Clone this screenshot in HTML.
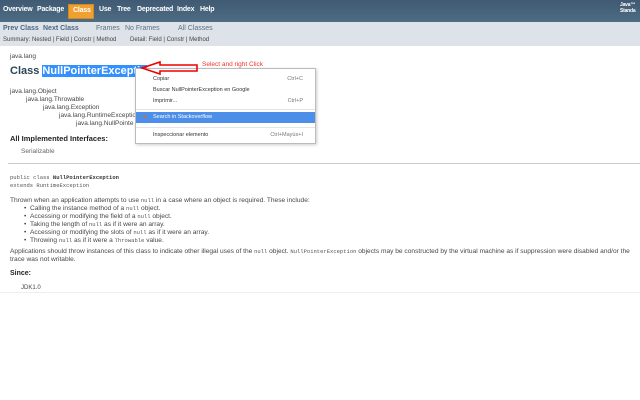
<!DOCTYPE html>
<html><head><meta charset="utf-8"><style>
*{margin:0;padding:0;box-sizing:border-box}
body{width:640px;height:400px;background:#fff;font-family:"Liberation Sans",sans-serif;position:relative;overflow:hidden;color:#353833}
.a{position:absolute;white-space:nowrap}
.top{left:0;top:0;width:640px;height:22px;background:linear-gradient(#3f5a72,#4f6c85)}
.top span{position:absolute;top:6px;color:#fff;font-size:7px;font-weight:bold;letter-spacing:-0.2px}
.sub{left:0;top:22px;width:640px;height:24px;background:#dee3e9}
.s{font-size:7px;color:#4a6782}
.g{font-size:7px;color:#5f6f80}
.t{font-size:6.5px;color:#474747}
.p{font-size:6.6px}
.m{font-family:"Liberation Mono",monospace;font-size:5.5px;color:#555}
.menu{left:135px;top:68px;width:181px;height:76px;background:#fff;border:1px solid #bbb;box-shadow:1px 1px 3px rgba(0,0,0,.2)}
.mi{position:absolute;left:17px;font-size:5.5px;color:#333}
.k{position:absolute;right:12px;font-size:5.5px;color:#777}
</style></head><body>
<div class="a top">
<span style="left:3px">Overview</span><span style="left:37px">Package</span>
<span style="left:68px;top:4px;width:26px;height:15px;background:#f0a030;border:1px solid #d08a20;padding:2px 0 0 4px">Class</span>
<span style="left:99px">Use</span><span style="left:117px">Tree</span><span style="left:137px">Deprecated</span><span style="left:177px">Index</span><span style="left:200px">Help</span>
<span style="left:620px;top:2px;font-size:5px">Java™<br>Standa</span>
</div>
<div class="a sub"></div>
<div class="a s" style="left:3px;top:25px;font-weight:bold;color:#4a6782">Prev Class</div>
<div class="a s" style="left:43px;top:25px;font-weight:bold;color:#4a6782">Next Class</div>
<div class="a g" style="left:96px;top:25px">Frames</div>
<div class="a g" style="left:125px;top:25px">No Frames</div>
<div class="a g" style="left:178px;top:25px">All Classes</div>
<div class="a g" style="left:3px;top:37px;font-size:6px;color:#444">Summary: Nested | Field | Constr | Method</div>
<div class="a g" style="left:130px;top:37px;font-size:6px;color:#444">Detail: Field | Constr | Method</div>

<div class="a t" style="left:10px;top:53px">java.lang</div>
<div class="a" style="left:10px;top:65px;font-size:11px;font-weight:bold;color:#2c4557">Class <span style="background:#3390ff;color:#fff">NullPointerExceptio</span></div>

<div class="a t" style="left:10px;top:88px">java.lang.Object</div>
<div class="a t" style="left:26px;top:96px">java.lang.Throwable</div>
<div class="a t" style="left:43px;top:104px">java.lang.Exception</div>
<div class="a t" style="left:59px;top:112px">java.lang.RuntimeExceptio</div>
<div class="a t" style="left:76px;top:120px">java.lang.NullPointe</div>
<div class="a" style="left:10px;top:134px;font-size:7.5px;font-weight:bold;color:#222">All Implemented Interfaces:</div>
<div class="a t" style="left:21px;top:148px;color:#666">Serializable</div>
<div class="a" style="left:8px;top:163px;width:632px;height:1px;background:#ccc"></div>

<div class="menu a">
<div class="mi" style="top:7px">Copiar</div><div class="k" style="top:7px">Ctrl+C</div>
<div class="mi" style="top:18px">Buscar NullPointerException en Google</div>
<div class="mi" style="top:29px">Imprimir...</div><div class="k" style="top:29px">Ctrl+P</div>
<div style="position:absolute;left:0;top:40px;width:179px;height:1px;background:#e4e4e4"></div>
<div style="position:absolute;left:0;top:43px;width:179px;height:11px;background:#4d8ee8"></div>
<div class="mi" style="top:45px;color:#fff">Search in Stackoverflow</div>
<div style="position:absolute;left:6px;top:45px;font-size:5px;color:#f60">▲</div>
<div style="position:absolute;left:0;top:58px;width:179px;height:1px;background:#e4e4e4"></div>
<div class="mi" style="top:63px">Inspeccionar elemento</div><div class="k" style="top:63px">Ctrl+Mayús+I</div>
</div>
<svg class="a" style="left:140px;top:60px;z-index:5" width="60" height="16"><path d="M2 8 L20 2 L20 5 L57 5 L57 11 L20 11 L20 14 Z" fill="none" stroke="#e00" stroke-width="1.6"/></svg>
<div class="a" style="left:202px;top:61px;font-size:6.5px;color:#e33">Select and right Click</div>

<div class="a m" style="left:10px;top:174px">public class <b style="color:#333">NullPointerException</b></div>
<div class="a m" style="left:10px;top:182px">extends RuntimeException</div>
<div class="a t p" style="left:10px;top:197px">Thrown when an application attempts to use <span class="m">null</span> in a case where an object is required. These include:</div>
<div class="a t p" style="left:24px;top:205px">• &nbsp;Calling the instance method of a <span class="m">null</span> object.</div>
<div class="a t p" style="left:24px;top:213px">• &nbsp;Accessing or modifying the field of a <span class="m">null</span> object.</div>
<div class="a t p" style="left:24px;top:221px">• &nbsp;Taking the length of <span class="m">null</span> as if it were an array.</div>
<div class="a t p" style="left:24px;top:229px">• &nbsp;Accessing or modifying the slots of <span class="m">null</span> as if it were an array.</div>
<div class="a t p" style="left:24px;top:237px">• &nbsp;Throwing <span class="m">null</span> as if it were a <span class="m">Throwable</span> value.</div>
<div class="a t p" style="left:10px;top:248px">Applications should throw instances of this class to indicate other illegal uses of the <span class="m">null</span> object. <span class="m">NullPointerException</span> objects may be constructed by the virtual machine as if suppression were disabled and/or the</div>
<div class="a t p" style="left:10px;top:256px">trace was not writable.</div>
<div class="a" style="left:10px;top:270px;font-size:7px;font-weight:bold;color:#222">Since:</div>
<div class="a t" style="left:21px;top:285px;font-size:6px">JDK1.0</div>
<div class="a" style="left:0;top:292px;width:640px;height:1px;background:#eee"></div>
</body></html>
